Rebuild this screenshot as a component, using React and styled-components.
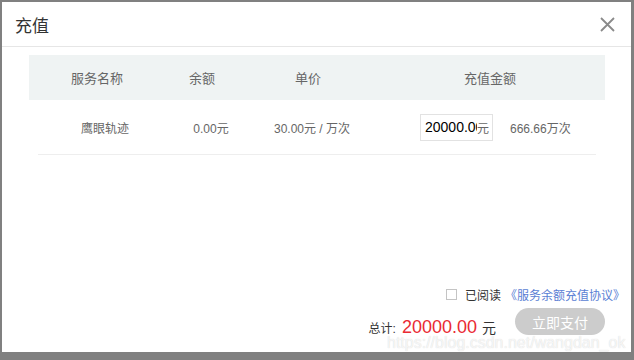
import React from 'react';
import styled, { createGlobalStyle } from 'styled-components';

const GlobalStyle = createGlobalStyle`
  html, body {
    margin: 0;
    padding: 0;
    background: #808080;
  }
  body {
    font-family: "Liberation Sans", "Noto Sans CJK SC", sans-serif;
  }
`;

const Page = styled.div`
  position: relative;
  width: 634px;
  height: 360px;
  padding: 2px 3px 8px 2px;
  box-sizing: border-box;
`;

const Dialog = styled.div`
  width: 629px;
  height: 350px;
  background: #fff;
  display: flex;
  flex-direction: column;
`;

const Header = styled.div`
  height: 44px;
  display: flex;
  align-items: center;
  justify-content: space-between;
  padding: 0 16px 0 13px;
  border-bottom: 1px solid #e6e6e6;
`;

const Title = styled.h2`
  margin: 0;
  font-size: 17px;
  font-weight: normal;
  color: #333;
  font-family: "Noto Sans CJK SC", sans-serif;
`;

const Close = styled.button`
  width: 16px;
  height: 16px;
  padding: 0;
  border: 0;
  background: none;
  display: flex;
  align-items: center;
  justify-content: center;
`;

const Body = styled.div`
  flex: 1;
  padding: 8px 26px 0 27px;
`;

const HeadRow = styled.div`
  display: grid;
  grid-template-columns: 136px 74px 138px 226px 1fr;
  height: 45px;
  align-items: center;
  background: #eff3f3;
`;

const HeadCell = styled.div`
  text-align: center;
  font-size: 13px;
  color: #666;
  font-family: "Noto Sans CJK SC", sans-serif;
`;

const DataRow = styled.div`
  margin: 0 9px;
  display: grid;
  grid-template-columns: 134px 78px 124px 1fr;
  height: 54px;
  align-items: center;
  border-bottom: 1px solid #eeeeee;
`;

const Cell = styled.div`
  text-align: center;
  font-size: 12px;
  color: #666;
`;

const AmountCell = styled.div`
  display: flex;
  align-items: center;
  padding-left: 46px;
  gap: 17px;
  font-size: 12px;
  color: #666;
`;

const InputBox = styled.label`
  display: flex;
  align-items: center;
  width: 73px;
  height: 27px;
  box-sizing: border-box;
  border: 1px solid #e2e2e2;
  padding-right: 2px;
`;

const Input = styled.input`
  width: 56px;
  box-sizing: border-box;
  padding: 0 0 0 4px;
  border: 0;
  outline: none;
  font-family: "Liberation Sans", sans-serif;
  font-size: 14px;
  color: #000;
  background: transparent;
`;

const Unit = styled.span`
  font-size: 12px;
  color: #666;
`;

const Footer = styled.div`
  display: flex;
  flex-direction: column;
  align-items: flex-end;
  gap: 6px;
  padding-bottom: 17px;
`;

const Agreement = styled.div`
  display: flex;
  align-items: center;
  height: 16px;
  padding-right: 6px;
  font-size: 12px;
  color: #333;
  font-family: "Noto Sans CJK SC", sans-serif;
`;

const Check = styled.span`
  width: 9px;
  height: 9px;
  border: 1px solid #c4c4c4;
  margin-right: 8px;
`;

const Link = styled.a`
  margin-left: 4px;
  color: #5a7ed4;
  text-decoration: none;
`;

const TotalRow = styled.div`
  display: flex;
  align-items: flex-end;
  padding-right: 26px;
`;

const Total = styled.div`
  display: flex;
  align-items: baseline;
  margin-bottom: -4px;
  margin-right: 19px;
  font-size: 12px;
  color: #333;
  line-height: 20px;
`;

const Price = styled.span`
  margin: 0 5px 0 6px;
  font-size: 18px;
  color: #ea2a33;
`;

const Yuan = styled.span`
  font-size: 14px;
`;

const PayButton = styled.button`
  width: 90px;
  height: 27px;
  border: 0;
  border-radius: 14px;
  background: #cccccc;
  color: #fff;
  font-size: 14px;
  font-family: "Noto Sans CJK SC", sans-serif;
  padding: 0;
`;

const Watermark = styled.div`
  position: absolute;
  left: 387px;
  top: 335px;
  font-family: "Liberation Sans", sans-serif;
  font-size: 16px;
  line-height: 16px;
  color: rgba(255, 255, 255, 0.75);
  text-shadow: 0 0 1px rgba(0, 0, 0, 0.18);
  pointer-events: none;
`;

const CloseIcon = () => (
  <svg width="15" height="15" viewBox="0 0 15 15">
    <path d="M1 1 L14 14 M14 1 L1 14" stroke="#8a8a8a" strokeWidth="1.8" fill="none" />
  </svg>
);

const App = () => (
  <Page>
    <GlobalStyle />
    <Dialog>
      <Header>
        <Title>充值</Title>
        <Close aria-label="close">
          <CloseIcon />
        </Close>
      </Header>

      <Body>
        <HeadRow>
          <HeadCell>服务名称</HeadCell>
          <HeadCell>余额</HeadCell>
          <HeadCell>单价</HeadCell>
          <HeadCell>充值金额</HeadCell>
          <span />
        </HeadRow>

        <DataRow>
          <Cell>鹰眼轨迹</Cell>
          <Cell>0.00元</Cell>
          <Cell>30.00元 / 万次</Cell>
          <AmountCell>
            <InputBox>
              <Input defaultValue="20000.00" readOnly />
              <Unit>元</Unit>
            </InputBox>
            666.66万次
          </AmountCell>
        </DataRow>
      </Body>

      <Footer>
        <Agreement>
          <Check />
          已阅读
          <Link href="#">《服务余额充值协议》</Link>
        </Agreement>
        <TotalRow>
          <Total>
            总计:
            <Price>20000.00</Price>
            <Yuan>元</Yuan>
          </Total>
          <PayButton>立即支付</PayButton>
        </TotalRow>
      </Footer>
    </Dialog>
    <Watermark>https://blog.csdn.net/wangdan_ok</Watermark>
  </Page>
);

export default App;
